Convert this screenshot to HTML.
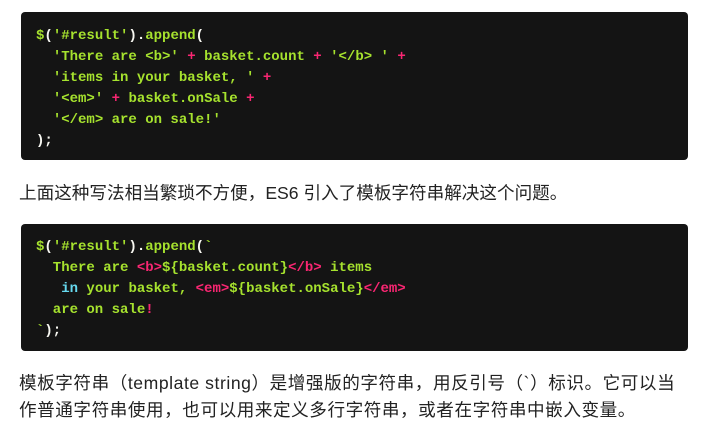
<!DOCTYPE html>
<html><head><meta charset="utf-8"><style>
body{margin:0;background:#fff;width:726px;height:432px;overflow:hidden;position:relative;font-family:"Liberation Sans","Noto Sans CJK SC",sans-serif;}
pre{position:absolute;left:21px;width:667px;margin:0;background:#141414;border-radius:4px;color:#f8f8f2;font-family:"Liberation Mono",monospace;font-size:14px;font-weight:bold;line-height:21px;padding:0 0 0 15px;box-sizing:border-box;white-space:pre;}
.g{color:#a6e22e}.s{color:#a6e22e}.p{color:#f92672 !important}.b{color:#66d9ef}
p{position:absolute;left:19px;margin:0;color:#222;font-size:17.6px;line-height:27px;white-space:nowrap;}
</style></head><body>
<pre style="top:12px;height:148px;padding-top:14px"><span class="g">$</span>(<span class="s">'#result'</span>).<span class="g">append</span>(
  <span class="s">'There are &lt;b&gt;'</span> <span class="p">+</span> <span class="g">basket.count</span> <span class="p">+</span> <span class="s">'&lt;/b&gt; '</span> <span class="p">+</span>
  <span class="s">'items in your basket, '</span> <span class="p">+</span>
  <span class="s">'&lt;em&gt;'</span> <span class="p">+</span> <span class="g">basket.onSale</span> <span class="p">+</span>
  <span class="s">'&lt;/em&gt; are on sale!'</span>
);</pre>
<p style="top:180px">上面这种写法相当繁琐不方便，ES6 引入了模板字符串解决这个问题。</p>
<pre style="top:224px;height:127px;padding-top:13px"><span class="g">$</span>(<span class="s">'#result'</span>).<span class="g">append</span>(<span class="s">`
  There are <span class="p">&lt;b&gt;</span>${basket.count}<span class="p">&lt;/b&gt;</span> items
   <span class="b">in</span> your basket, <span class="p">&lt;em&gt;</span>${basket.onSale}<span class="p">&lt;/em&gt;</span>
  are on sale<span class="p">!</span>
`</span>);</pre>
<p style="top:370px;letter-spacing:0.55px">模板字符串（template string）是增强版的字符串，用反引号（`）标识。它可以当<br>作普通字符串使用，也可以用来定义多行字符串，或者在字符串中嵌入变量。</p>
</body></html>
